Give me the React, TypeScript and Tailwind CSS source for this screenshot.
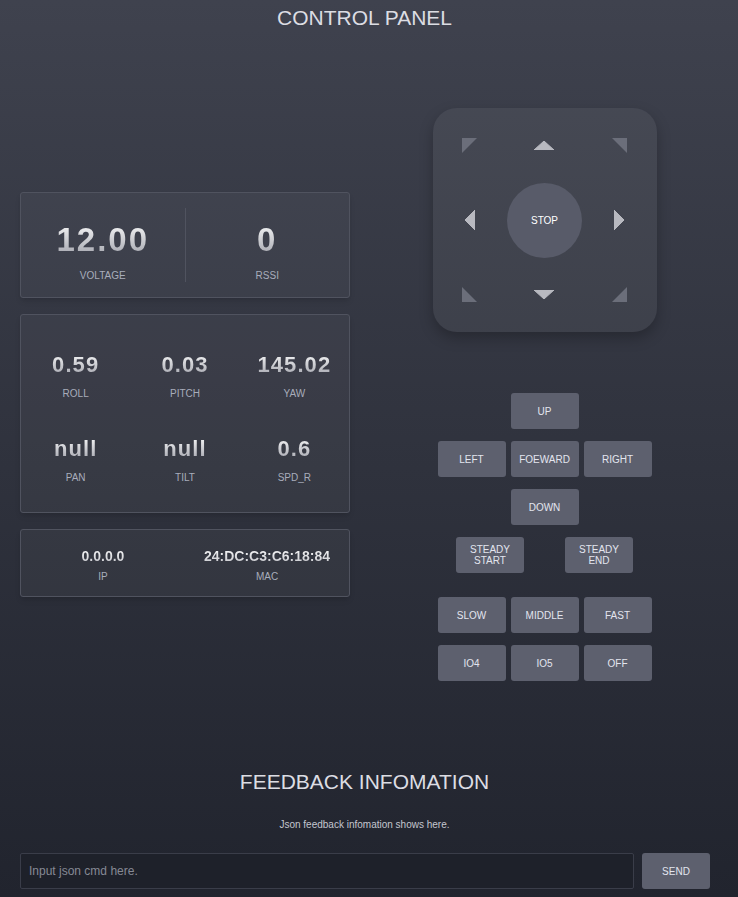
const font = { fontFamily: '"Liberation Sans", Arial, sans-serif' };

const attitude = [
  { value: "0.59", label: "ROLL" },
  { value: "0.03", label: "PITCH" },
  { value: "145.02", label: "YAW" },
  { value: "null", label: "PAN" },
  { value: "null", label: "TILT" },
  { value: "0.6", label: "SPD_R" },
];

const Corner = ({ points }: { points: string }) => (
  <svg width="15" height="15" viewBox="0 0 15 15">
    <polygon points={points} fill="#6b6e7a" />
  </svg>
);

const Arrow = ({ dir }: { dir: "up" | "down" | "left" | "right" }) => {
  const vertical = dir === "up" || dir === "down";
  const pts = {
    up: "0,9 10,0 20,9",
    down: "0,0 20,0 10,9",
    left: "10,0 10,20 0,10",
    right: "0,0 10,10 0,20",
  }[dir];
  return (
    <svg width={vertical ? 20 : 10} height={vertical ? 9 : 20} viewBox={vertical ? "0 0 20 9" : "0 0 10 20"}>
      <polygon points={pts} fill="#b8b9c0" stroke="#b8b9c0" strokeWidth="1" strokeLinejoin="round" />
    </svg>
  );
};

const Btn = ({ children }: { children: React.ReactNode }) => (
  <button className="h-[36px] w-[68px] rounded-[3px] bg-[#5d606e] text-[10px] leading-[11px] text-[#e3e5ee]">
    {children}
  </button>
);

const Value = ({ children, className }: { children: React.ReactNode; className: string }) => (
  <div
    className={`bg-gradient-to-b from-white to-[#9a9ca5] bg-clip-text font-bold text-transparent ${className}`}
  >
    {children}
  </div>
);

const Label = ({ children }: { children: React.ReactNode }) => (
  <div className="text-[10px] leading-[14px] text-[#a8adbb]">{children}</div>
);

export default function App() {
  return (
    <div
      style={font}
      className="flex min-h-screen flex-col bg-gradient-to-b from-[#3f424e] to-[#21242e] pt-[6px] pb-[8px]"
    >
      <h1 className="pr-[9px] text-center text-[21px] leading-[24px] text-[#dcdde3]">CONTROL PANEL</h1>

      <div className="mt-[78px] flex items-center">
        {/* status cards */}
        <div className="ml-5 flex w-[330px] flex-col gap-4">
          <div className="flex h-[106px] rounded-[3px] border border-[#50535f] bg-white/[0.04] py-[15px] shadow-md">
            <div className="flex flex-1 flex-col items-center border-r border-[#50535f] pt-[12px]">
              <Value className="text-[33px] leading-[40px] tracking-[0.06em]">12.00</Value>
              <div className="mt-[9px]">
                <Label>VOLTAGE</Label>
              </div>
            </div>
            <div className="flex flex-1 flex-col items-center pt-[12px]">
              <Value className="text-[33px] leading-[40px] tracking-[0.06em]">0</Value>
              <div className="mt-[9px]">
                <Label>RSSI</Label>
              </div>
            </div>
          </div>

          <div className="grid grid-cols-3 gap-y-[34px] rounded-[3px] border border-[#50535f] bg-white/[0.04] pt-[36px] pb-[27px] shadow-md">
            {attitude.map((a) => (
              <div key={a.label} className="flex flex-col items-center">
                <Value className="text-[22px] leading-[28px] tracking-[0.05em]">{a.value}</Value>
                <div className="mt-[8px]">
                  <Label>{a.label}</Label>
                </div>
              </div>
            ))}
          </div>

          <div className="grid grid-cols-2 rounded-[3px] border border-[#50535f] bg-white/[0.04] pt-[17px] pb-[12px] shadow-md">
            {[
              { value: "0.0.0.0", label: "IP" },
              { value: "24:DC:C3:C6:18:84", label: "MAC" },
            ].map((a) => (
              <div key={a.label} className="flex flex-col items-center">
                <div className="bg-gradient-to-b from-white to-[#c2c3c9] bg-clip-text text-[14px] leading-[18px] font-bold text-transparent">
                  {a.value}
                </div>
                <div className="mt-[5px]">
                  <Label>{a.label}</Label>
                </div>
              </div>
            ))}
          </div>
        </div>

        {/* controls */}
        <div className="flex flex-1 flex-col items-center pl-px">
          <div className="grid h-[224px] w-[224px] grid-cols-3 grid-rows-3 place-items-center rounded-[24px] bg-white/[0.05] shadow-[0_6px_14px_rgba(0,0,0,0.25)]">
            <Corner points="0,0 15,0 0,15" />
            <Arrow dir="up" />
            <Corner points="0,0 15,0 15,15" />
            <Arrow dir="left" />
            <button className="flex h-[75px] w-[75px] items-center justify-center rounded-full bg-[#585b69] text-[10px] text-white">
              STOP
            </button>
            <Arrow dir="right" />
            <Corner points="0,0 15,15 0,15" />
            <Arrow dir="down" />
            <Corner points="15,0 15,15 0,15" />
          </div>

          <div className="mt-[61px] grid grid-cols-[68px_68px_68px] gap-x-[5px] gap-y-[12px]">
            <div />
            <Btn>UP</Btn>
            <div />
            <Btn>LEFT</Btn>
            <Btn>FOEWARD</Btn>
            <Btn>RIGHT</Btn>
            <div />
            <Btn>DOWN</Btn>
            <div />
          </div>
          <div className="mt-[12px] flex gap-[41px]">
            <Btn>
              STEADY
              <br />
              START
            </Btn>
            <Btn>
              STEADY
              <br />
              END
            </Btn>
          </div>

          <div className="mt-[24px] grid grid-cols-[68px_68px_68px] gap-x-[5px] gap-y-[12px]">
            <Btn>SLOW</Btn>
            <Btn>MIDDLE</Btn>
            <Btn>FAST</Btn>
            <Btn>IO4</Btn>
            <Btn>IO5</Btn>
            <Btn>OFF</Btn>
          </div>
        </div>
      </div>

      <h2 className="mt-[89px] pr-[9px] text-center text-[21px] leading-[24px] text-[#dcdde3]">
        FEEDBACK INFOMATION
      </h2>
      <p className="mt-[24px] pr-[9px] text-center text-[10px] leading-[14px] text-[#c4c6cf]">
        Json feedback infomation shows here.
      </p>

      <div className="mt-[21px] flex gap-2 pr-[28px] pl-5">
        <input
          placeholder="Input json cmd here."
          className="h-[36px] flex-1 rounded-[2px] border border-[#3a3d49] bg-[#1e212a] px-2 text-[12px] text-[#dcdde3] outline-none placeholder:text-[#868995]"
        />
        <button className="h-[36px] w-[68px] rounded-[3px] bg-[#5d606e] text-[10px] text-[#e3e5ee]">SEND</button>
      </div>
    </div>
  );
}
